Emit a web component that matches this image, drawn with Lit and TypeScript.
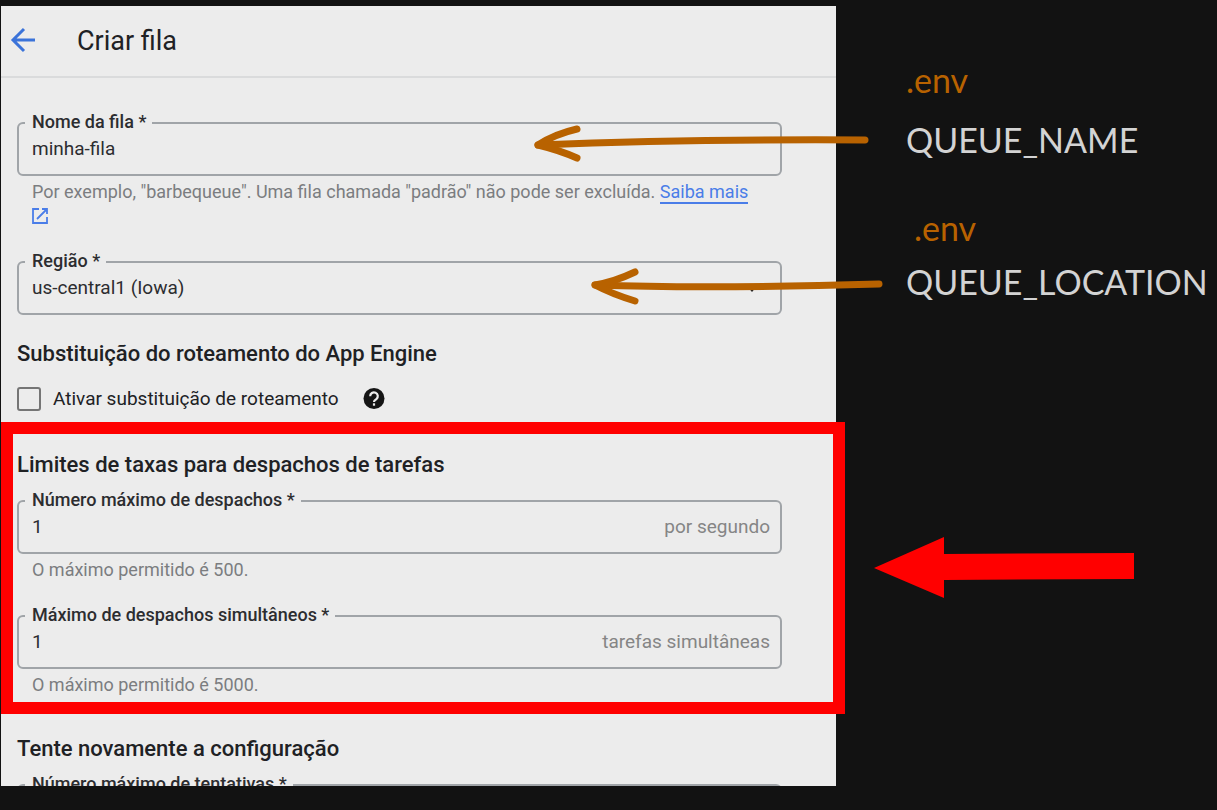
import { LitElement, html, css, svg, nothing } from "lit";
import { customElement, property } from "lit/decorators.js";

@customElement("outlined-field")
class OutlinedField extends LitElement {
  @property() label = "";
  @property() value = "";
  @property() suffix = "";
  @property({ type: Array }) options: string[] = [];

  static styles = css`
    :host {
      display: block;
      color: #2c2d30;
    }
    .outline {
      display: flex;
      align-items: center;
      min-width: 0;
      margin: 0;
      padding: 4px 10px 13px 13px;
      border: 2px solid #a0a4a8;
      border-radius: 6px;
    }
    .legend {
      margin-left: -7px;
      padding: 0 6px 2px 7px;
      font-size: 18px;
      font-weight: 500;
      line-height: 18px;
    }
    .control {
      flex: 1;
      min-width: 0;
      height: 24px;
      margin: 0;
      padding: 0;
      border: 0;
      outline: 0;
      background: none;
      color: inherit;
      font: 400 19px/24px Roboto, sans-serif;
      appearance: none;
    }
    .suffix {
      color: #858585;
      font-size: 19px;
      line-height: 24px;
    }
    .caret {
      width: 12px;
      height: 7px;
      margin-right: 12px;
    }
    .help {
      padding: 4px 24px 0 15px;
      color: #7b7d80;
      font-size: 18px;
      line-height: 24px;
    }
  `;

  render() {
    return html`
      <fieldset class="outline">
        <legend class="legend"><label for="control">${this.label} *</label></legend>
        ${this.options.length
          ? html`<select class="control" id="control">
                ${this.options.map((o) => html`<option>${o}</option>`)}
              </select>
              <svg class="caret" viewBox="0 0 12 7" aria-hidden="true">
                <path d="M0 0h12L6 7z" fill="#202124" />
              </svg>`
          : html`<input class="control" id="control" type="text" .value=${this.value} />`}
        ${this.suffix ? html`<span class="suffix">${this.suffix}</span>` : nothing}
      </fieldset>
      <div class="help"><slot></slot></div>
    `;
  }
}

@customElement("app-root")
class AppRoot extends LitElement {
  static styles = css`
    :host {
      display: grid;
      grid-template-columns: minmax(0, 835fr) minmax(0, 381fr);
      box-sizing: border-box;
      height: 100vh;
      padding: 6px 0 24px 1px;
      background: #121212;
      color: #202124;
      font-family: Roboto, sans-serif;
    }
    .panel {
      min-height: 0;
      overflow-x: visible;
      overflow-y: clip;
      background: #ececec;
    }
    .bar {
      display: flex;
      align-items: center;
      gap: 38px;
      height: 70px;
      padding-left: 8px;
      border-bottom: 2px solid #dadbdc;
    }
    .back {
      display: flex;
      padding: 0;
      border: 0;
      background: none;
    }
    .title {
      margin: 0;
      font-size: 27px;
      font-weight: 400;
      line-height: 32px;
    }
    .group {
      padding: 0 54px 0 16px;
    }
    .intro {
      padding-top: 35px;
    }
    .heading {
      margin: 0 0 12px;
      font-size: 22px;
      font-weight: 500;
      line-height: 28px;
    }
    .routing {
      margin: 21px 0 19px;
    }
    .field + .field {
      margin-top: 24px;
    }
    .link {
      border-bottom: 2px solid #4a7de8;
      color: #4a7de8;
      text-decoration: none;
    }
    .external {
      vertical-align: -2px;
    }
    .option {
      display: flex;
      align-items: center;
      height: 24px;
      font-size: 19px;
      line-height: 24px;
    }
    .box {
      box-sizing: border-box;
      width: 24px;
      height: 24px;
      margin: 0 12px 0 0;
      border: 2px solid #757575;
      border-radius: 3px;
      appearance: none;
    }
    .hint {
      margin-left: 24px;
    }
    .limits {
      margin: 11px -9px 21px 0;
      padding: 17px 51px 5px 4px;
      border: 12px solid #ff0000;
    }
    .notes {
      position: relative;
      z-index: 1;
      padding: 52px 0 0 70px;
      color: #d3d3d3;
      font-family: Lato, sans-serif;
      font-size: 34px;
      line-height: 44px;
      white-space: nowrap;
    }
    .note {
      display: grid;
      gap: 16px;
      margin-bottom: 44px;
    }
    .near {
      gap: 10px;
    }
    .env {
      color: #b86200;
    }
    .near .env {
      padding-left: 8px;
    }
    .name {
      position: relative;
    }
    .arrow {
      position: absolute;
      top: 3px;
      right: 100%;
    }
    .first {
      margin-right: 33px;
    }
    .second {
      margin-right: 20px;
    }
    .pointer {
      display: block;
      margin: 233px 0 0 -32px;
    }
  `;

  private arrow(kind: string, width: number, shaft: string, head: string) {
    return html`<svg class="arrow ${kind}" width=${width} height="44" viewBox="0 0 ${width} 44"
      fill="none" stroke="#b86200" stroke-width="7" stroke-linecap="round" stroke-linejoin="round">
      ${svg`<path d=${shaft} /><path d=${head} />`}
    </svg>`;
  }

  render() {
    return html`
      <main class="panel">
        <header class="bar">
          <button class="back" aria-label="Voltar">
            <svg width="30" height="30" viewBox="0 0 30 30" fill="none" stroke="#3b73d9" stroke-width="3">
              <path d="M26 14H5M15 3 4 14l11 11" />
            </svg>
          </button>
          <h1 class="title">Criar fila</h1>
        </header>

        <section class="group intro">
          <outlined-field class="field" label="Nome da fila" value="minha-fila"
            >Por exemplo, "barbequeue". Uma fila chamada "padrão" não pode ser excluída.
            <a class="link" href="#">Saiba mais</a>
            <svg class="external" width="16" height="16" viewBox="0 0 16 16" fill="none" stroke="#4a7de8" stroke-width="1.8">
              <path d="M7 1H1v14h14V9M10 1h5v5M15 1 5 11" />
            </svg></outlined-field>
          <outlined-field class="field" label="Região" .options=${["us-central1 (Iowa)"]}></outlined-field>
          <h2 class="heading routing">Substituição do roteamento do App Engine</h2>
          <div class="option">
            <input class="box" type="checkbox" id="routing" />
            <label for="routing">Ativar substituição de roteamento</label>
            <svg class="hint" width="22" height="22" viewBox="0 0 22 22" role="img" aria-label="Ajuda">
              <circle cx="11" cy="10.5" r="10.5" fill="#151515" />
              <path d="M7.2 8.3a3.8 3.8 0 1 1 6.2 2.8c-1.4 1.1-2.4 1.5-2.4 3" fill="none" stroke="#ececec" stroke-width="2.2" />
              <path d="M9.9 15.3h2.2v2.4H9.9z" fill="#ececec" />
            </svg>
          </div>
        </section>

        <section class="limits">
          <h2 class="heading">Limites de taxas para despachos de tarefas</h2>
          <outlined-field class="field" label="Número máximo de despachos" value="1" suffix="por segundo"
            >O máximo permitido é 500.</outlined-field>
          <outlined-field class="field" label="Máximo de despachos simultâneos" value="1" suffix="tarefas simultâneas"
            >O máximo permitido é 5000.</outlined-field>
        </section>

        <section class="group">
          <h2 class="heading">Tente novamente a configuração</h2>
          <outlined-field class="field" label="Número máximo de tentativas"></outlined-field>
        </section>
      </main>

      <aside class="notes">
        <div class="note">
          <span class="env">.env</span>
          <span class="name">QUEUE_NAME
            ${this.arrow("first", 342, "M7 24Q160 18 334 19", "M46 8Q24 13 7 24Q28 29 46 37")}
          </span>
        </div>
        <div class="note near">
          <span class="env">.env</span>
          <span class="name">QUEUE_LOCATION
            ${this.arrow("second", 298, "M7 22Q120 26 291 21", "M47 9Q26 19 7 22Q24 31 47 38")}
          </span>
        </div>
        <svg class="pointer" width="260" height="62" viewBox="0 0 260 62" aria-hidden="true">
          <path d="M0 31 70 0v17l190-1v26l-190 1v18z" fill="#ff0000" />
        </svg>
      </aside>
    `;
  }
}
